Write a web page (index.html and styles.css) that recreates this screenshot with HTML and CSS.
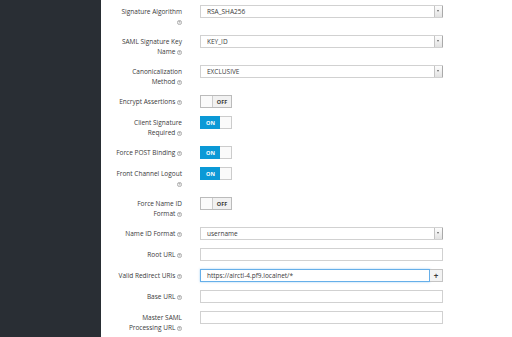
FILE: index.html
```html
<!DOCTYPE html>
<html lang="en">
<head>
  <meta charset="UTF-8" />
  <meta name="viewport" content="width=device-width, initial-scale=1.0" />
  <title>Client Settings</title>
  <link rel="stylesheet" href="styles.css">
</head>
<body>
  <div class="layout">
    <aside class="sidebar"></aside>
    <main class="content">
      <form class="form">
        <div class="row">
          <label class="label">Signature Algorithm<br><svg class="help" viewBox="0 0 6 6"><circle cx="3" cy="3" r="2.5"/><path d="M2.2 2.4a.8.8 0 1 1 1.2.7c-.3.2-.4.3-.4.6M3 4.3v.2"/></svg></label>
          <div class="select">RSA_SHA256<span class="arrow"></span></div>
        </div>
        <div class="row">
          <label class="label">SAML Signature Key<br>Name <svg class="help" viewBox="0 0 6 6"><circle cx="3" cy="3" r="2.5"/><path d="M2.2 2.4a.8.8 0 1 1 1.2.7c-.3.2-.4.3-.4.6M3 4.3v.2"/></svg></label>
          <div class="select">KEY_ID<span class="arrow"></span></div>
        </div>
        <div class="row">
          <label class="label">Canonicalization<br>Method <svg class="help" viewBox="0 0 6 6"><circle cx="3" cy="3" r="2.5"/><path d="M2.2 2.4a.8.8 0 1 1 1.2.7c-.3.2-.4.3-.4.6M3 4.3v.2"/></svg></label>
          <div class="select">EXCLUSIVE<span class="arrow"></span></div>
        </div>
        <div class="row">
          <label class="label">Encrypt Assertions <svg class="help" viewBox="0 0 6 6"><circle cx="3" cy="3" r="2.5"/><path d="M2.2 2.4a.8.8 0 1 1 1.2.7c-.3.2-.4.3-.4.6M3 4.3v.2"/></svg></label>
          <div class="switch off"><span class="handle"></span><span class="state">OFF</span></div>
        </div>
        <div class="row">
          <label class="label">Client Signature<br>Required <svg class="help" viewBox="0 0 6 6"><circle cx="3" cy="3" r="2.5"/><path d="M2.2 2.4a.8.8 0 1 1 1.2.7c-.3.2-.4.3-.4.6M3 4.3v.2"/></svg></label>
          <div class="switch on"><span class="state">ON</span><span class="handle"></span></div>
        </div>
        <div class="row">
          <label class="label">Force POST Binding <svg class="help" viewBox="0 0 6 6"><circle cx="3" cy="3" r="2.5"/><path d="M2.2 2.4a.8.8 0 1 1 1.2.7c-.3.2-.4.3-.4.6M3 4.3v.2"/></svg></label>
          <div class="switch on"><span class="state">ON</span><span class="handle"></span></div>
        </div>
        <div class="row">
          <label class="label">Front Channel Logout<br><svg class="help" viewBox="0 0 6 6"><circle cx="3" cy="3" r="2.5"/><path d="M2.2 2.4a.8.8 0 1 1 1.2.7c-.3.2-.4.3-.4.6M3 4.3v.2"/></svg></label>
          <div class="switch on"><span class="state">ON</span><span class="handle"></span></div>
        </div>
        <div class="row">
          <label class="label">Force Name ID<br>Format <svg class="help" viewBox="0 0 6 6"><circle cx="3" cy="3" r="2.5"/><path d="M2.2 2.4a.8.8 0 1 1 1.2.7c-.3.2-.4.3-.4.6M3 4.3v.2"/></svg></label>
          <div class="switch off"><span class="handle"></span><span class="state">OFF</span></div>
        </div>
        <div class="row">
          <label class="label">Name ID Format <svg class="help" viewBox="0 0 6 6"><circle cx="3" cy="3" r="2.5"/><path d="M2.2 2.4a.8.8 0 1 1 1.2.7c-.3.2-.4.3-.4.6M3 4.3v.2"/></svg></label>
          <div class="select">username<span class="arrow"></span></div>
        </div>
        <div class="row">
          <label class="label">Root URL <svg class="help" viewBox="0 0 6 6"><circle cx="3" cy="3" r="2.5"/><path d="M2.2 2.4a.8.8 0 1 1 1.2.7c-.3.2-.4.3-.4.6M3 4.3v.2"/></svg></label>
          <div class="input"></div>
        </div>
        <div class="row">
          <label class="label">Valid Redirect URIs <svg class="help" viewBox="0 0 6 6"><circle cx="3" cy="3" r="2.5"/><path d="M2.2 2.4a.8.8 0 1 1 1.2.7c-.3.2-.4.3-.4.6M3 4.3v.2"/></svg></label>
          <div class="input-group">
            <div class="input focus">https://airctl-4.pf9.localnet/*</div>
            <span class="add">+</span>
          </div>
        </div>
        <div class="row">
          <label class="label">Base URL <svg class="help" viewBox="0 0 6 6"><circle cx="3" cy="3" r="2.5"/><path d="M2.2 2.4a.8.8 0 1 1 1.2.7c-.3.2-.4.3-.4.6M3 4.3v.2"/></svg></label>
          <div class="input"></div>
        </div>
        <div class="row">
          <label class="label">Master SAML<br>Processing URL <svg class="help" viewBox="0 0 6 6"><circle cx="3" cy="3" r="2.5"/><path d="M2.2 2.4a.8.8 0 1 1 1.2.7c-.3.2-.4.3-.4.6M3 4.3v.2"/></svg></label>
          <div class="input"></div>
        </div>
      </form>
    </main>
  </div>
</body>
</html>
```
FILE: styles.css
```css
body {
  margin: 0;
  font-family: 'Open Sans', sans-serif;
  font-size: 6.5px;
  color: #3a3a3a;
  background: #fff;
}
.layout {
  display: flex;
  height: 337px;
  overflow: hidden;
}
.sidebar {
  width: 101px;
  flex-shrink: 0;
  background: #292e34;
}
.content {
  flex: 1;
  padding-top: 5px;
}
.row {
  display: grid;
  grid-template-columns: 81px 243px;
  column-gap: 18px;
  align-items: start;
  margin-bottom: 8px;
}
.label {
  text-align: right;
  padding-top: 2px;
  line-height: 10px;
}
.help {
  width: 5px;
  height: 5px;
  vertical-align: -0.5px;
}
.help circle {
  fill: #f4f4f4;
  stroke: #9a9a9a;
  stroke-width: 0.9;
}
.help path {
  fill: none;
  stroke: #8a8a8a;
  stroke-width: 0.7;
}
.select, .input {
  box-sizing: border-box;
  height: 13px;
  border: 1px solid #d1d1d1;
  display: flex;
  align-items: center;
  padding-left: 6px;
  background: #fff;
}
.select .arrow {
  margin-left: auto;
  width: 7px;
  height: 100%;
  border-left: 1px solid #c4c4c4;
  border-right: 1px solid #a9a9a9;
  margin-right: -1px;
  background: linear-gradient(#fdfdfd, #e2e2e2);
  position: relative;
}
.select .arrow::after {
  content: '';
  position: absolute;
  left: 2px;
  top: 4px;
  border-left: 1.5px solid transparent;
  border-right: 1.5px solid transparent;
  border-top: 2px solid #666;
}
.input-group {
  display: flex;
}
.input-group .input {
  flex: 1;
}
.input.focus {
  border-color: #66afe9;
  box-shadow: 0 0 2px rgba(102, 175, 233, 0.6);
}
.add {
  box-sizing: border-box;
  width: 13px;
  height: 13px;
  border: 1px solid #c4c4c4;
  border-left: none;
  background: #f3f3f3;
  font-size: 8px;
  font-weight: 700;
  line-height: 11px;
  text-align: center;
}
.switch {
  box-sizing: border-box;
  display: flex;
  width: 32px;
  height: 13px;
  border: 1px solid #bbb;
  font-size: 5.5px;
  font-weight: 700;
}
.switch .handle {
  width: 11px;
  background: #fafafa;
}
.switch .state {
  flex: 1;
  display: flex;
  align-items: center;
  justify-content: center;
}
.switch.off .handle {
  border-right: 1px solid #ccc;
}
.switch.off .state {
  background: #f1f1f1;
  color: #363636;
}
.switch.on {
  border-color: #0b99d6;
}
.switch.on .state {
  background: #0b99d6;
  color: #fff;
}
.switch.on .handle {
  border: 1px solid #ccc;
  border-left: none;
  margin: -1px -1px -1px 0;
}
```
